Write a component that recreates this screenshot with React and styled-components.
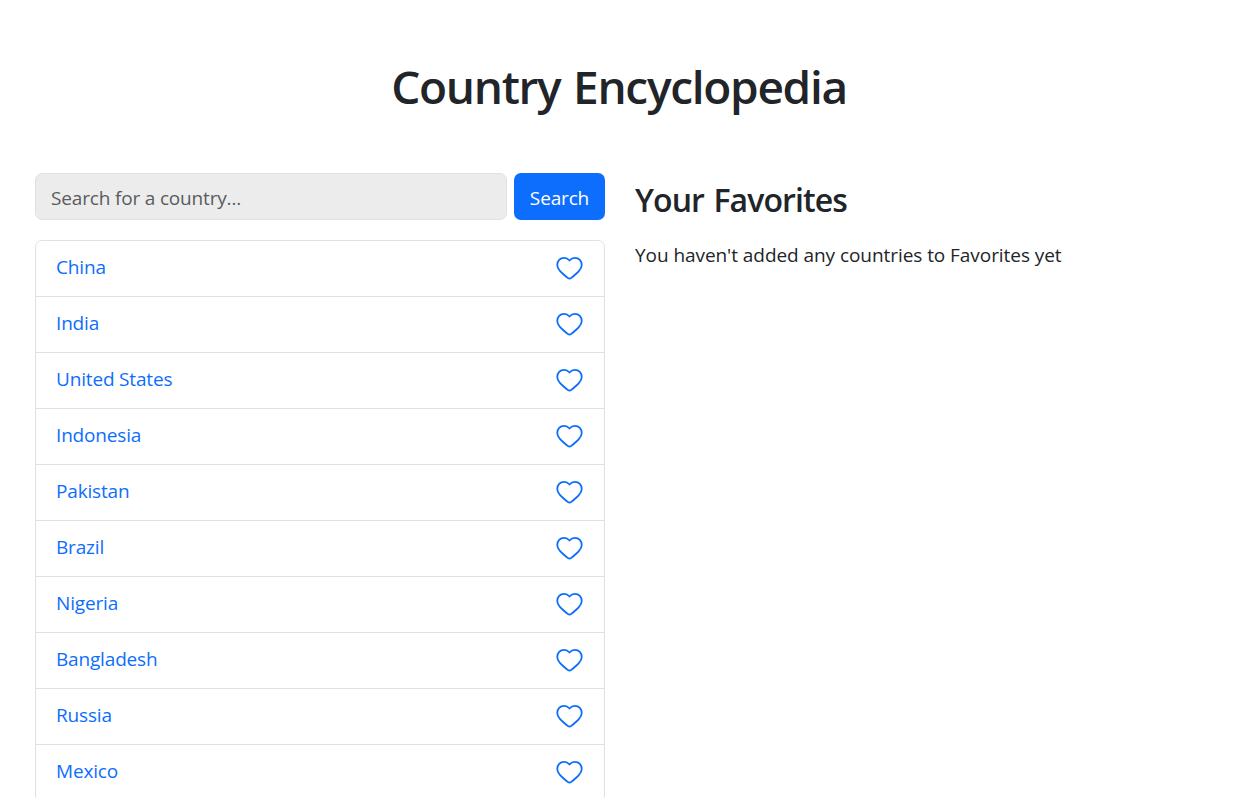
import React from "react";
import styled, { createGlobalStyle } from "styled-components";

const Global = createGlobalStyle`
  *, *::before, *::after { box-sizing: border-box; }
  body {
    margin: 0;
    background: #fff;
    color: #212529;
    font-family: "Segoe UI", "Open Sans", sans-serif;
    font-size: 19px;
    line-height: 30px;
    overflow: hidden;
  }
`;

const Page = styled.main`
  height: 798px;
  padding: 58px 35px 0;
  overflow: hidden;
`;

const Title = styled.h1`
  margin: 0 0 59px;
  padding-left: 2px;
  text-align: center;
  font-size: 46px;
  line-height: 56px;
  font-weight: 600;
  letter-spacing: -1.3px;
  word-spacing: 2px;
  white-space: nowrap;
`;

const Columns = styled.div`
  display: grid;
  grid-template-columns: 570px 1fr;
  column-gap: 30px;
`;

const SearchForm = styled.form`
  display: flex;
  gap: 7px;
  height: 47px;
  margin-bottom: 20px;
`;

const SearchInput = styled.input`
  flex: 1;
  min-width: 0;
  padding: 2px 15px 0;
  border: 1px solid #dee2e6;
  border-radius: 7px;
  background: #ececec;
  color: #212529;
  font: inherit;
  letter-spacing: -0.17px;
  &::placeholder { color: #595c5f; opacity: 1; }
`;

const SearchButton = styled.button`
  width: 91px;
  padding: 2px 0 0;
  border: 0;
  border-radius: 7px;
  background: #0d6efd;
  color: #fff;
  font: inherit;
  letter-spacing: -0.15px;
`;

const CountryList = styled.ul`
  list-style: none;
  margin: 0;
  padding: 0;
  border: 1px solid #dee2e6;
  border-radius: 7px 7px 0 0;
`;

const CountryRow = styled.li`
  display: flex;
  justify-content: space-between;
  height: 56px;
  padding: 11px 21px 0 20px;
  border-bottom: 1px solid #dee2e6;
`;

const CountryLink = styled.a`
  color: #0d6efd;
  letter-spacing: -0.17px;
`;

const Heart = styled.svg`
  width: 27px;
  height: 24px;
  margin-top: 4px;
  fill: none;
  stroke: #0d6efd;
  stroke-width: 1.8;
  stroke-linejoin: round;
`;

const Favorites = styled.section`
  padding-top: 7px;
`;

const FavoritesTitle = styled.h2`
  margin: 0 0 20px;
  font-size: 32px;
  line-height: 40px;
  font-weight: 600;
  letter-spacing: -0.9px;
  word-spacing: 2px;
`;

const Message = styled.p`
  margin: 0;
  letter-spacing: -0.06px;
  white-space: nowrap;
`;

const countries = ["China", "India", "United States", "Indonesia", "Pakistan", "Brazil", "Nigeria", "Bangladesh", "Russia", "Mexico"];

export default function App() {
  return (
    <Page>
      <Global />
      <Title>Country Encyclopedia</Title>
      <Columns>
        <div>
          <SearchForm>
            <SearchInput placeholder="Search for a country..." />
            <SearchButton type="button">Search</SearchButton>
          </SearchForm>
          <CountryList>
            {countries.map((name) => (
              <CountryRow key={name}>
                <CountryLink>{name}</CountryLink>
                <Heart viewBox="0 0 27 24">
                  <path d="M13.5 4.5C12 2.7 10.300 1.900 8 1.900C4 1.900 1.300 4.900 1.300 8.700C1.300 12.400 3.600 14.900 6.600 17.500C8.700 19.300 10.400 20.900 12 22.100Q13.500 23.100 15 22.100C16.600 20.900 18.300 19.300 20.400 17.500C23.400 14.900 25.700 12.400 25.700 8.700C25.700 4.900 23 1.900 19 1.900C16.700 1.900 15 2.700 13.500 4.500Z" />
                </Heart>
              </CountryRow>
            ))}
          </CountryList>
        </div>
        <Favorites>
          <FavoritesTitle>Your Favorites</FavoritesTitle>
          <Message>You haven't added any countries to Favorites yet</Message>
        </Favorites>
      </Columns>
    </Page>
  );
}
